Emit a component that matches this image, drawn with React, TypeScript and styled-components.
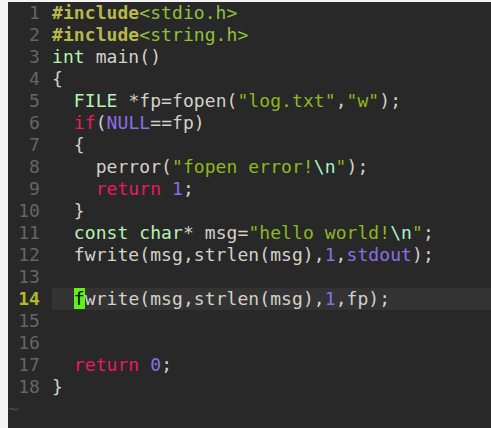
import React from 'react';
import styled, { createGlobalStyle } from 'styled-components';

type Kind = 'plain' | 'pre' | 'inc' | 'type' | 'kw' | 'num' | 'str' | 'esc' | 'cursor';
type Token = [Kind, string];

const colors: Record<Kind, string> = {
    plain: '#d4d1c9',
    pre: '#b9b84c',
    inc: '#8fc23a',
    type: '#b8f3b4',
    kw: '#ec1a5c',
    num: '#8d6ee6',
    str: '#8cb91c',
    esc: '#aef5c6',
    cursor: '#000000',
};

const GlobalStyle = createGlobalStyle`
    html, body {
        margin: 0;
        padding: 0;
        background: #f3f3f3;
    }
`;

const Page = styled.div`
    height: 100vh;
    padding: 2px 0 0 8px;
    box-sizing: border-box;
    background: #f3f3f3;
`;

const Editor = styled.div`
    height: 100%;
    background: #282828;
    font-family: 'DejaVu Sans Mono', 'Liberation Mono', monospace;
    font-size: 18px;
    letter-spacing: 0.07px;
    display: flex;
    flex-direction: column;
    overflow: hidden;
`;

const Row = styled.div`
    display: flex;
    height: 22px;
    line-height: 22px;
    white-space: pre;
`;

const LineNr = styled.span<{ $current?: boolean }>`
    width: 32px;
    margin-right: 12px;
    text-align: right;
    color: ${(p) => (p.$current ? '#b3ba2c' : '#666666')};
    font-weight: ${(p) => (p.$current ? 'bold' : 'normal')};
`;

const Code = styled.span<{ $current?: boolean }>`
    flex: 1;
    background: ${(p) => (p.$current ? '#333333' : 'transparent')};
`;

const Tok = styled.span<{ $kind: Kind }>`
    color: ${(p) => colors[p.$kind]};
    font-weight: ${(p) => (p.$kind === 'pre' ? 'bold' : 'normal')};
    background: ${(p) => (p.$kind === 'cursor' ? '#5ef217' : 'transparent')};
`;

const Tilde = styled.div`
    height: 22px;
    line-height: 22px;
    color: #4c4c4c;
`;

const lines: Token[][] = [
    [['pre', '#include'], ['inc', '<stdio.h>']],
    [['pre', '#include'], ['inc', '<string.h>']],
    [['type', 'int'], ['plain', ' main()']],
    [['plain', '{']],
    [['plain', '  '], ['type', 'FILE'], ['plain', ' *fp=fopen('], ['str', '"log.txt"'], ['plain', ','], ['str', '"w"'], ['plain', ');']],
    [['plain', '  '], ['kw', 'if'], ['plain', '('], ['num', 'NULL'], ['plain', '==fp)']],
    [['plain', '  {']],
    [['plain', '    perror('], ['str', '"fopen error!'], ['esc', '\\n'], ['str', '"'], ['plain', ');']],
    [['plain', '    '], ['kw', 'return'], ['plain', ' '], ['num', '1'], ['plain', ';']],
    [['plain', '  }']],
    [['plain', '  '], ['type', 'const'], ['plain', ' '], ['type', 'char'], ['plain', '* msg='], ['str', '"hello world!'], ['esc', '\\n'], ['str', '"'], ['plain', ';']],
    [['plain', '  fwrite(msg,strlen(msg),'], ['num', '1'], ['plain', ','], ['num', 'stdout'], ['plain', ');']],
    [],
    [['plain', '  '], ['cursor', 'f'], ['plain', 'write(msg,strlen(msg),'], ['num', '1'], ['plain', ',fp);']],
    [],
    [],
    [['plain', '  '], ['kw', 'return'], ['plain', ' '], ['num', '0'], ['plain', ';']],
    [['plain', '}']],
];

const CURRENT = 14;

const App: React.FC = () => {
    return (
        <>
            <GlobalStyle />
            <Page>
                <Editor>
                    {lines.map((tokens, i) => {
                        const current = i + 1 === CURRENT;
                        return (
                            <Row key={i}>
                                <LineNr $current={current}>{i + 1}</LineNr>
                                <Code $current={current}>
                                    {tokens.map(([kind, text], j) => (
                                        <Tok key={j} $kind={kind}>
                                            {text}
                                        </Tok>
                                    ))}
                                </Code>
                            </Row>
                        );
                    })}
                    <Tilde>~</Tilde>
                </Editor>
            </Page>
        </>
    );
};

export default App;
